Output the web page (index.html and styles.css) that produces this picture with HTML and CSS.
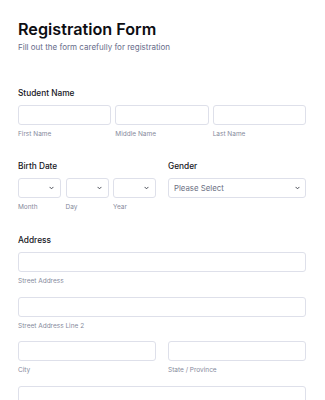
FILE: index.html
```html
<!DOCTYPE html>
<html>
<head>
<meta charset="utf-8">
<link rel="stylesheet" href="styles.css">
</head>
<body>
<div class="page">
  <h1 class="title">Registration Form</h1>
  <p class="subtitle">Fill out the form carefully for registration</p>

  <section class="section first">
    <div class="label">Student Name</div>
    <div class="row3">
      <div class="field"><div class="input"></div><div class="sub">First Name</div></div>
      <div class="field"><div class="input"></div><div class="sub">Middle Name</div></div>
      <div class="field"><div class="input"></div><div class="sub">Last Name</div></div>
    </div>
  </section>

  <section class="section cols2">
    <div>
      <div class="label">Birth Date</div>
      <div class="row3 tight">
        <div class="field"><div class="input select"><svg class="chev" viewBox="0 0 6 4"><path d="M0.7 0.7 L3 3 L5.3 0.7" /></svg></div><div class="sub">Month</div></div>
        <div class="field"><div class="input select"><svg class="chev" viewBox="0 0 6 4"><path d="M0.7 0.7 L3 3 L5.3 0.7" /></svg></div><div class="sub">Day</div></div>
        <div class="field"><div class="input select"><svg class="chev" viewBox="0 0 6 4"><path d="M0.7 0.7 L3 3 L5.3 0.7" /></svg></div><div class="sub">Year</div></div>
      </div>
    </div>
    <div>
      <div class="label">Gender</div>
      <div class="input select wide"><span class="placeholder">Please Select</span><svg class="chev" viewBox="0 0 6 4"><path d="M0.7 0.7 L3 3 L5.3 0.7" /></svg></div>
    </div>
  </section>

  <section class="section addr-section">
    <div class="label">Address</div>
    <div class="field addr"><div class="input"></div><div class="sub">Street Address</div></div>
    <div class="field addr"><div class="input"></div><div class="sub">Street Address Line 2</div></div>
    <div class="row2">
      <div class="field addr"><div class="input"></div><div class="sub">City</div></div>
      <div class="field addr"><div class="input"></div><div class="sub">State / Province</div></div>
    </div>
    <div class="field addr"><div class="input"></div></div>
  </section>
</div>
</body>
</html>
```

FILE: styles.css
```css
html, body {
  margin: 0;
  padding: 0;
  background: #ffffff;
}
body {
  font-family: Inter, "Noto Sans", sans-serif;
  overflow: hidden;
  height: 400px;
}
.page {
  padding: 17px 19px 0 18px;
}
.title {
  margin: 0;
  font-size: 16.2px;
  line-height: 24px;
  font-weight: 600;
  color: #0d0d12;
}
.subtitle {
  margin: 0;
  font-size: 8px;
  line-height: 12px;
  color: #676c8a;
}
.section {
  margin-top: 21px;
}
.section.first {
  margin-top: 34px;
}
.section.addr-section {
  margin-top: 22px;
}
.label {
  font-size: 8.3px;
  line-height: 12px;
  font-weight: 500;
  color: #15151c;
  margin-bottom: 6px;
}
.row3 {
  display: grid;
  grid-template-columns: 1fr 1fr 1fr;
  column-gap: 4px;
}
.row3.tight {
  column-gap: 4.5px;
}
.cols2, .row2 {
  display: grid;
  grid-template-columns: 1fr 1fr;
  column-gap: 12px;
}
.input {
  box-sizing: border-box;
  height: 20px;
  border: 1px solid #dee0ea;
  border-radius: 3px;
  background: #fff;
}
.select {
  display: flex;
  align-items: center;
  justify-content: flex-end;
  padding-right: 6px;
}
.select.wide {
  justify-content: space-between;
  padding-left: 5px;
  padding-right: 5px;
}
.placeholder {
  font-size: 7.8px;
  color: #6c7083;
}
.chev {
  width: 5px;
  height: 4px;
  fill: none;
  stroke: #3c3f4a;
  stroke-width: 1.1;
}
.sub {
  margin-top: 4px;
  font-size: 6.5px;
  line-height: 10px;
  color: #868a9c;
}
.addr {
  margin-bottom: 10.5px;
}
```
